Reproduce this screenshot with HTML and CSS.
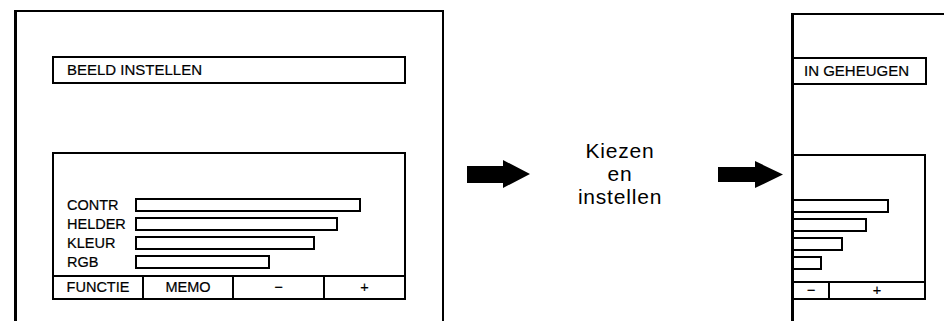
FILE: index.html
```html
<!DOCTYPE html>
<html>
    <head>
        <title>Beeld instellen</title>
        <meta charset="UTF-8">
        <meta name="viewport" content="width=device-width, initial-scale=1.0">
        <link rel="stylesheet" href="styles.css">
    </head>
    <body>
        <div class="screen">
            <div class="title">BEELD INSTELLEN</div>
            <div class="panel">
                <div class="bars">
                    <div class="row"><span class="label">CONTR</span><span class="bar" style="width: 226px"></span></div>
                    <div class="row"><span class="label">HELDER</span><span class="bar" style="width: 203px"></span></div>
                    <div class="row"><span class="label">KLEUR</span><span class="bar" style="width: 180px"></span></div>
                    <div class="row"><span class="label">RGB</span><span class="bar" style="width: 135px"></span></div>
                </div>
                <div class="keys">
                    <span>FUNCTIE</span>
                    <span>MEMO</span>
                    <span>&minus;</span>
                    <span>+</span>
                </div>
            </div>
        </div>

        <div class="flow">
            <svg class="arrow" width="63" height="28" viewBox="0 0 63 28">
                <polygon points="0,6 36,6 36,0 63,14 36,28 36,23 0,23"/>
            </svg>
            <div class="step">Kiezen<br>en<br>instellen</div>
            <svg class="arrow arrow-low" width="65" height="27" viewBox="0 0 65 27">
                <polygon points="0,6 37,6 37,0 65,13.5 37,27 37,21 0,21"/>
            </svg>
        </div>

        <!-- right screen is cut off by the page edge -->
        <div class="screen screen-cut">
            <div class="title">IN GEHEUGEN</div>
            <div class="panel">
                <div class="bars">
                    <div class="row"><span class="bar" style="width: 95px"></span></div>
                    <div class="row"><span class="bar" style="width: 73px"></span></div>
                    <div class="row"><span class="bar" style="width: 49px"></span></div>
                    <div class="row"><span class="bar" style="width: 28px"></span></div>
                </div>
                <div class="keys">
                    <span>&minus;</span>
                    <span>+</span>
                </div>
            </div>
        </div>
    </body>
</html>
```

FILE: styles.css
```css
* {
    box-sizing: border-box;
}

body {
    margin: 0;
    height: 321px;
    overflow: hidden;
    display: flex;
    align-items: flex-start;
    background: white;
    color: black;
    font-family: "Liberation Sans", Arial, sans-serif;
    -webkit-text-stroke: 0.2px black;
}

/* Outer screen frame, open at the bottom */
.screen {
    width: 430px;
    height: 311px;
    margin: 10px 0 0 14px;
    padding: 44px 0 0 35px;
    border: 2px solid black;
    border-left-width: 3px;
    border-bottom: none;
}

.title {
    width: 354px;
    height: 28px;
    border: 2px solid black;
    padding-left: 13px;
    font-size: 15px;
    line-height: 24px;
}

.panel {
    width: 354px;
    height: 148px;
    margin-top: 68px;
    border: 2px solid black;
    display: flex;
    flex-direction: column;
}

.bars {
    flex: 1;
    display: flex;
    flex-direction: column;
    justify-content: flex-end;
    gap: 5px;
    padding: 0 0 6px 13px;
}

.row {
    display: flex;
    align-items: center;
    height: 14px;
}

.label {
    width: 68px;
    font-size: 14.5px;
    line-height: 14px;
}

.bar {
    height: 14px;
    border: 2px solid black;
}

.keys {
    display: grid;
    grid-template-columns: 88px 90px 91px 1fr;
    height: 23px;
    border-top: 2px solid black;
    font-size: 14.5px;
    line-height: 21px;
    text-align: center;
}

.keys span + span {
    border-left: 2px solid black;
}

/* Middle: arrows and caption */
.flow {
    display: flex;
    align-items: center;
    height: 69px;
    margin: 139px 8px 0 23px;
}

.arrow polygon {
    fill: black;
}

.arrow-low {
    margin: 2px 0 0 8px;
}

.step {
    width: 180px;
    text-align: center;
    font-size: 21px;
    line-height: 23px;
    letter-spacing: 0.8px;
    -webkit-text-stroke: 0;
}

/* Right screen, cropped on the left and right */
.screen-cut {
    flex: 1;
    width: auto;
    height: 308px;
    margin: 13px 0 0 0;
    padding: 42px 0 0 0;
    border-right: none;
}

.screen-cut .title {
    width: 133px;
    border-left: none;
    padding-left: 10px;
}

.screen-cut .panel {
    width: 132px;
    height: 146px;
    margin-top: 69px;
    border-left: none;
}

.screen-cut .bars {
    padding: 0 0 11px 0;
}

.screen-cut .bar {
    border-left: none;
}

.screen-cut .keys {
    grid-template-columns: 34px 1fr;
    height: 17px;
    line-height: 15px;
}
```
